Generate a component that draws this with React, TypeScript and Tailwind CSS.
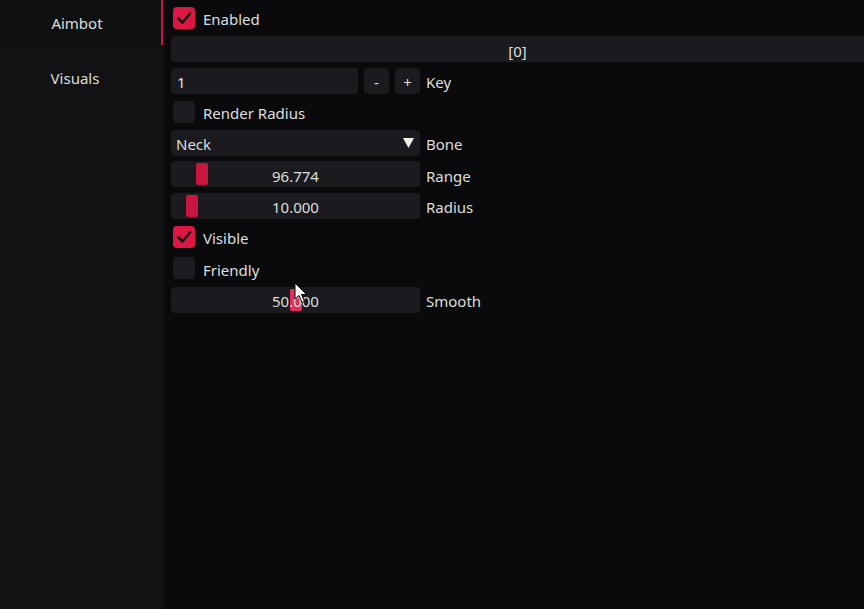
import React from 'react'

const frame = 'h-[26px] rounded-[4px] bg-[#1b1b1f]'
// text in the original sits a touch below the frame centre
const txt = 'pt-[3px]'

function Check({ on }: { on?: boolean }) {
  return (
    <div className={`ml-[2px] flex h-[22px] w-[22px] items-center justify-center rounded-[4px] ${on ? 'bg-[#dc1743]' : 'bg-[#1c1c20]'}`}>
      {on && (
        <svg width="18" height="18" viewBox="0 0 18 18">
          <path d="M3.5 9.5 L7.5 13.5 L15 4.5" fill="none" stroke="#141414" strokeWidth="2.6" strokeLinecap="round" strokeLinejoin="round" />
        </svg>
      )}
    </div>
  )
}

function CheckRow({ on, label }: { on?: boolean; label: string }) {
  return (
    <div className="flex h-[26px] items-center gap-[8px]">
      <Check on={on} />
      <span className={txt}>{label}</span>
    </div>
  )
}

function Slider({ value, grab, label, active }: { value: string; grab: number; label: string; active?: boolean }) {
  return (
    <div className="flex h-[26px] items-center gap-[6px]">
      <div className={`relative flex w-[249px] items-center justify-center ${frame}`}>
        <div
          className={`absolute top-[2px] h-[22px] w-[12px] rounded-[2px] ${active ? 'bg-[#e0305a]' : 'bg-[#c8173f]'}`}
          style={{ left: grab }}
        />
        <span className={`relative ${txt}`}>{value}</span>
      </div>
      <span className={txt}>{label}</span>
    </div>
  )
}

export default function App() {
  return (
    <div className="relative flex h-[609px] w-[864px] overflow-hidden bg-[#0a0a0d] font-['Noto_Sans',sans-serif] text-[15px] text-[#dedede]">
      <aside className="flex w-[164px] flex-col gap-[10px] bg-[#121215]">
        <div className="relative flex h-[45px] items-center justify-center bg-[#0f1012] pr-[10px] pt-[1px]">
          Aimbot
          <span className="absolute right-[1px] top-0 h-full w-[2px] bg-[#c8163e]" />
        </div>
        <div className="flex h-[45px] items-center justify-center pr-[14px] pt-[1px]">Visuals</div>
      </aside>

      <main className="flex flex-1 flex-col gap-[5.3px] pl-[7px] pt-[5px]">
        <CheckRow on label="Enabled" />

        <div className={`flex items-center justify-center ${frame} rounded-r-none`}>
          <span className={txt}>[0]</span>
        </div>

        <div className="flex h-[26px] items-center">
          <div className={`flex w-[187px] items-center px-[6px] ${frame}`}>
            <span className={txt}>1</span>
          </div>
          <div className={`ml-[6px] flex w-[25px] items-center justify-center ${frame}`}>
            <span className={txt}>-</span>
          </div>
          <div className={`ml-[6px] flex w-[25px] items-center justify-center ${frame}`}>
            <span className={txt}>+</span>
          </div>
          <span className={`ml-[6px] ${txt}`}>Key</span>
        </div>

        <CheckRow label="Render Radius" />

        <div className="flex h-[26px] items-center gap-[6px]">
          <div className={`flex w-[249px] items-center justify-between pl-[5px] pr-[6px] ${frame}`}>
            <span className={txt}>Neck</span>
            <svg width="11" height="10" viewBox="0 0 11 10">
              <path d="M0 0 H11 L5.5 10 Z" fill="#f0f0f0" />
            </svg>
          </div>
          <span className={txt}>Bone</span>
        </div>

        <Slider value="96.774" grab={25} label="Range" />
        <Slider value="10.000" grab={15} label="Radius" />

        <CheckRow on label="Visible" />
        <CheckRow label="Friendly" />

        <Slider value="50.000" grab={119} label="Smooth" active />
      </main>

      <svg className="absolute left-[294px] top-[282px]" width="14" height="22" viewBox="0 0 14 22">
        <path d="M1 1 L1 17 L5 13.5 L8 20.5 L10.5 19.5 L7.5 12.5 L12.5 12.5 Z" fill="#ffffff" stroke="#000000" strokeWidth="1" strokeLinejoin="round" />
      </svg>
    </div>
  )
}
